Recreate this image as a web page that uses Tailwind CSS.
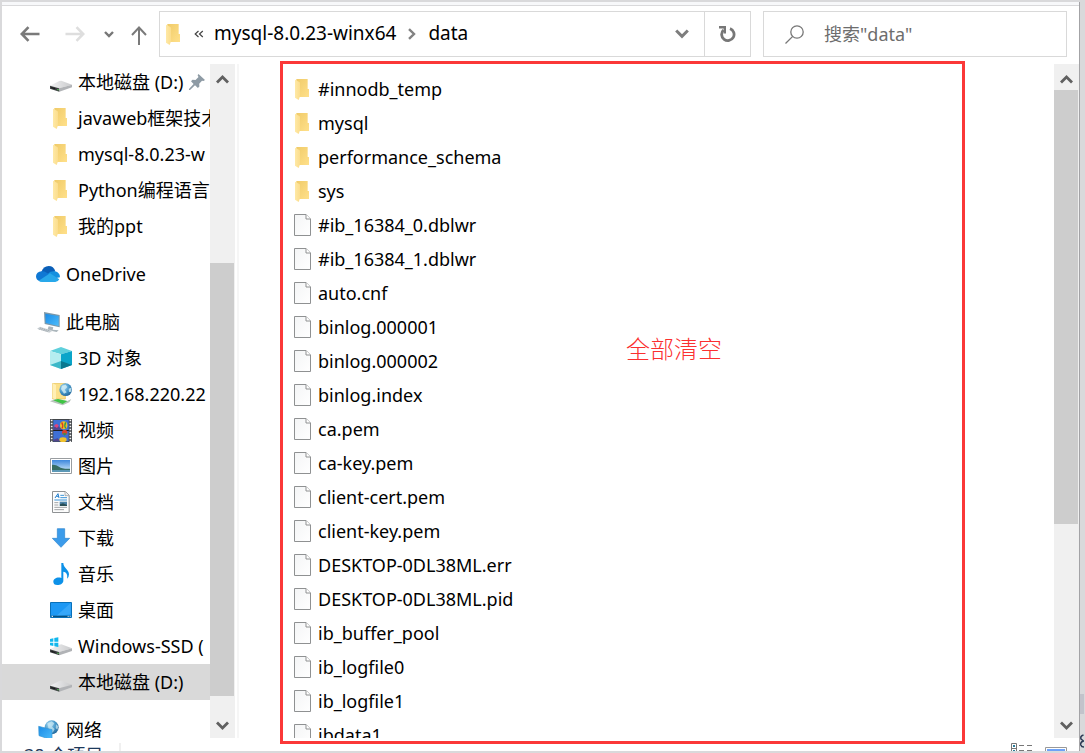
<!DOCTYPE html>
<html lang="zh-CN">
<head>
<meta charset="utf-8">
<meta name="viewport" content="width=device-width, initial-scale=1">
<title>data</title>
<script src="https://cdn.jsdelivr.net/npm/@tailwindcss/browser@4"></script>
</head>
<body class="flex h-screen overflow-hidden bg-[#d9d9db] font-['Noto_Sans','Noto_Sans_CJK_SC',sans-serif] text-lg leading-6 text-black">

<!-- Shared icons -->
<svg class="absolute size-0" aria-hidden="true">
  <defs>
    <linearGradient id="gFolder" x1="0" y1="0" x2="1" y2="1"><stop offset="0" stop-color="#f0cb69"/><stop offset="1" stop-color="#ffe08a"/></linearGradient>
    <linearGradient id="gFlap" x1="0" y1="0" x2="1" y2="0"><stop offset="0" stop-color="#ffe9a6"/><stop offset="1" stop-color="#fbdd8d"/></linearGradient>
    <linearGradient id="gFile" x1="0" y1="0" x2="1" y2="1"><stop offset="0" stop-color="#f4f5f6"/><stop offset="1" stop-color="#ffffff"/></linearGradient>
    <linearGradient id="gDisk" x1="0" y1="0" x2="1" y2="0"><stop offset="0" stop-color="#f2f2f3"/><stop offset="1" stop-color="#c9cacc"/></linearGradient>
    <linearGradient id="gScreen" x1="0" y1="0" x2="1" y2="1"><stop offset="0" stop-color="#1b8be6"/><stop offset="1" stop-color="#4dbdfb"/></linearGradient>
    <radialGradient id="gGlobe" cx=".35" cy=".3" r=".8"><stop offset="0" stop-color="#a9dcf5"/><stop offset=".55" stop-color="#4596c8"/><stop offset="1" stop-color="#1d5f93"/></radialGradient>
    <linearGradient id="gSky" x1="0" y1="0" x2="0" y2="1"><stop offset="0" stop-color="#3d87dc"/><stop offset="1" stop-color="#d9effa"/></linearGradient>
  </defs>
  <symbol id="folder" viewBox="0 0 42 63">
    <path d="M4 0H38V30H42V54H4Z" fill="url(#gFolder)"/>
    <path d="M0 2L13 9Q15 10 15 13V52L11 63L0 56Z" fill="url(#gFlap)"/>
  </symbol>
  <symbol id="file" viewBox="0 0 17 22">
    <path d="M.5.5H12L16.500 5V21.500H.5Z" fill="url(#gFile)" stroke="#8f9192"/>
    <path d="M12 .5V5H16.500" fill="#fff" stroke="#8f9192"/>
  </symbol>
  <symbol id="disk" viewBox="0 0 66 36">
    <path d="M0 17L28 3Q31 2 34 2L66 14L27 25Z" fill="url(#gDisk)"/>
    <path d="M66 14V22L28 35L27 25Z" fill="#b1b3b6"/>
    <path d="M0 17L27 25L28 35L0 26Z" fill="#3d4042"/>
    <path d="M4 21L16 25V28L4 25Z" fill="#181a1b"/><path d="M22 27h4v4h-4z" fill="#55c757"/>
  </symbol>
</svg>

<div class="my-0.5 ml-0.5 flex min-w-0 flex-1 flex-col border-r border-[#a3a3a6] bg-white">
  <div class="h-1 shrink-0 border-b border-[#d9d9db] bg-[#f7f8fa]"></div>

  <!-- Toolbar -->
  <header class="flex h-[58px] shrink-0 items-start pt-[5px] pr-3">
    <div class="flex h-[46px] w-[157px] shrink-0 items-center pl-4">
      <button aria-label="后退" class="flex w-6 justify-center"><svg width="20" height="16" viewBox="0 0 20 16" fill="none" stroke="#7a7a7a" stroke-width="2.600"><path d="M19.500 8H2M8.500 1.200L1.800 8l6.700 6.800"/></svg></button>
      <button aria-label="前进" disabled class="ml-[21px] flex w-6 justify-center"><svg width="20" height="16" viewBox="0 0 20 16" fill="none" stroke="#dedede" stroke-width="2.600"><path d="M.5 8H18M11.500 1.200L18.200 8l-6.700 6.800"/></svg></button>
      <button aria-label="最近的位置" class="ml-2.5 flex w-6 justify-center"><svg width="10" height="7" viewBox="0 0 10 7" fill="none" stroke="#777" stroke-width="2.400"><path d="M1 1l4 4 4-4"/></svg></button>
      <button aria-label="上移" class="ml-1.5 flex w-6 justify-center pt-0.5"><svg width="16" height="19" viewBox="0 0 16 19" fill="none" stroke="#7a7a7a" stroke-width="2"><path d="M8 19V1.500M1 9l7-7.500L15 9"/></svg></button>
    </div>
    <div class="flex h-[46px] min-w-0 flex-1 items-center border border-[#d9d9d9] text-[19px]">
      <svg class="ml-1.5 shrink-0" width="14" height="21"><use href="#folder"/></svg>
      <button aria-label="更多" class="ml-3.5 flex w-4"><svg width="10" height="8" viewBox="0 0 10 8" fill="none" stroke="#444" stroke-width="1.200"><path d="M4.500 1L1.200 4l3.300 3M8.800 1L5.500 4l3.300 3"/></svg></button>
      <button class="ml-1 pb-0.5 whitespace-nowrap">mysql-8.0.23-winx64</button>
      <svg class="ml-3 shrink-0" width="8" height="12" viewBox="0 0 8 12" fill="none" stroke="#828282" stroke-width="2.400"><path d="M1 1.200L6 6l-5 4.800"/></svg>
      <button class="ml-3 pb-0.5">data</button>
      <button aria-label="展开地址" class="ml-auto flex h-full w-11 items-center justify-center"><svg width="14" height="10" viewBox="0 0 14 10" fill="none" stroke="#7d7d7d" stroke-width="3"><path d="M1.200 1.500L7 7.300l5.800-5.800"/></svg></button>
      <button aria-label="刷新" class="flex h-full w-[46px] items-center justify-center border-l border-[#d9d9d9]"><svg width="17" height="17" viewBox="0 0 17 17" fill="none" stroke="#777"><path d="M4.500 4A6.200 6.200 0 1 0 11 2.600" stroke-width="2.800"/><path d="M0 1.200H5.800V7.500" stroke-width="2.400"/></svg></button>
    </div>
    <label class="ml-3 flex h-[46px] w-76 shrink-0 items-center border border-[#d9d9d9] pl-[21px]">
      <svg width="19" height="19" viewBox="0 0 19 19" fill="none" stroke="#777" stroke-width="1.300" aria-hidden="true"><circle cx="12" cy="7" r="6.200"/><path d="M7.700 11.400L.5 18.500"/></svg>
      <input type="text" aria-label="搜索" placeholder='搜索"data"' class="ml-5 min-w-0 flex-1 bg-transparent outline-none placeholder:text-[#6d6d6d]">
    </label>
  </header>

  <!-- Navigation pane and file list -->
  <div class="relative flex min-h-0 flex-1">
    <nav class="w-[208px] shrink-0 overflow-hidden whitespace-nowrap">
      <ul>
        <li><a href="#" class="flex h-9 items-center gap-1.5 pl-12"><svg class="mt-2 shrink-0" width="22" height="12"><use href="#disk"/></svg>本地磁盘 (D:)<svg class="shrink-0" width="16" height="16" viewBox="0 0 16 16" fill="#8e9ba5" aria-hidden="true"><path d="M9.500 0L16 6l-1.500 1-1.500-.2-2.800 3 .2 2.700-1.500 1.500L6 11.300 1 16H0v-1l4.600-5L2 7.200l1.500-1.400 3 .2L9.500 3 8.600 1.200Z"/></svg></a></li>
        <li><a href="#" class="flex h-9 items-center gap-1.5 pl-12"><svg class="shrink-0" width="22" height="21"><use href="#folder" x="3" width="14" height="21"/></svg>javaweb框架技术</a></li>
        <li><a href="#" class="flex h-9 items-center gap-1.5 pl-12"><svg class="shrink-0" width="22" height="21"><use href="#folder" x="3" width="14" height="21"/></svg>mysql-8.0.23-w</a></li>
        <li><a href="#" class="flex h-9 items-center gap-1.5 pl-12"><svg class="shrink-0" width="22" height="21"><use href="#folder" x="3" width="14" height="21"/></svg>Python编程语言</a></li>
        <li><a href="#" class="flex h-9 items-center gap-1.5 pl-12"><svg class="shrink-0" width="22" height="21"><use href="#folder" x="3" width="14" height="21"/></svg>我的ppt</a></li>
      </ul>
      <ul class="mt-3">
        <li><a href="#" class="flex h-9 items-center gap-1.5 pl-[34px]"><svg class="shrink-0" width="24" height="16" viewBox="0 0 72 48"><path d="M16 18Q22 0 38 0Q53 0 58 16L30 34Z" fill="#0a5fb8"/><path d="M12 46Q0 43 0 31Q1 17 17 16Q24 15 32 20L54 34L30 46Z" fill="#0f78d4"/><path d="M36 23Q44 14 57 16Q72 20 72 34L50 38Z" fill="#1490df"/><path d="M8 44L42 22L70 40Q66 48 58 48H18Q12 48 8 44Z" fill="#28a8ea"/></svg>OneDrive</a></li>
      </ul>
      <ul class="mt-3">
        <li><a href="#" class="flex h-9 items-center gap-1.5 pl-[34px]"><svg class="shrink-0" width="24" height="21" viewBox="0 0 72 63"><path d="M24 0L71 9V46L26 36Z" fill="#7d98a8"/><path d="M28 5L68 12V42L29 33Z" fill="url(#gScreen)"/><path d="M38 43L52 46L50 53L68 55L62 60L34 54Z" fill="#aab5bb"/><path d="M12 44L50 56L40 62L3 50Z" fill="#ccd2d6"/><path d="M12 48L42 57M8 51L37 59" stroke="#8e999f" stroke-dasharray="4 2" stroke-width="2"/></svg>此电脑</a></li>
        <li><a href="#" class="flex h-9 items-center gap-1.5 pl-12"><svg class="shrink-0" width="22" height="22" viewBox="0 0 66 66"><path d="M0 12L33 0L66 12L33 22Z" fill="#5fd0dc"/><path d="M0 12L33 22V66L0 54Z" fill="#b5edf0"/><path d="M66 12L33 22V66L66 54Z" fill="#0aa5c9"/><path d="M0 54L33 42V66Z" fill="#3cb8c8"/><path d="M33 42L66 54L33 66Z" fill="#08788f"/></svg>3D 对象</a></li>
        <li><a href="#" class="flex h-9 items-center gap-1.5 pl-12"><svg class="shrink-0" width="22" height="23" viewBox="0 0 66 69"><path d="M8 1H46V48H8Z" fill="#fbe08a" stroke="#e5bd4c" stroke-width="2"/><path d="M8 1L18 6V50L8 46Z" fill="#ffefb5"/><circle cx="47" cy="20" r="19" fill="url(#gGlobe)"/><path d="M36 8L47 5L52 12L44 20L50 28L42 32L33 18ZM56 17L64 14V26L57 27Z" fill="#d2edf5" opacity=".8"/><path d="M0 55L16 48L52 54L64 48L58 58L38 67L18 61Z" fill="#b9c4bc"/><path d="M10 52L24 48L52 54L38 63Z" fill="#3fc445"/></svg>192.168.220.22</a></li>
        <li><a href="#" class="flex h-9 items-center gap-1.5 pl-12"><svg class="shrink-0" width="22" height="23" viewBox="0 0 66 69"><path d="M0 0H66V69H0Z" fill="#42464a"/><path d="M10 3H56V33H10ZM10 36H56V67H10Z" fill="#3f70d5"/><path d="M10 25L25 22L38 33H10ZM10 62L23 58L31 67H10Z" fill="#52468e"/><ellipse cx="41" cy="19" rx="11" ry="12" fill="#f1be28"/><path d="M35 10Q41 20 36 28" stroke="#d73b28" stroke-width="4" fill="none"/><path d="M47 10Q42 20 47 28" stroke="#2b9b50" stroke-width="4" fill="none"/><path d="M12 21Q20 10 26 20L21 27Z" fill="#e0437a"/><path d="M10 33H56V36H10Z" fill="#1b1d22"/><circle cx="44" cy="40" r="8" fill="#d8452f"/><path d="M38 43H50L44 50Z" fill="#2b9b50"/><ellipse cx="39" cy="62" rx="11" ry="7" fill="#f0c12c"/><path d="M5 2V69M61 2V69" stroke="#f5f5f5" stroke-width="5" stroke-dasharray="5 4"/></svg>视频</a></li>
        <li><a href="#" class="flex h-9 items-center gap-1.5 pl-12"><svg class="shrink-0" width="22" height="16" viewBox="0 0 66 48"><path d="M1.500 1.500H64.500V46.500H1.500Z" fill="#fff" stroke="#999da0" stroke-width="3"/><path d="M6 6H60V42H6Z" fill="url(#gSky)"/><path d="M6 20Q18 19 27 26T60 32V36H6Z" fill="#376d63"/><path d="M6 36H60V42H6Z" fill="#5c98b6"/></svg>图片</a></li>
        <li><a href="#" class="flex h-9 items-center gap-1.5 pl-12"><svg class="shrink-0" width="22" height="22" viewBox="0 0 66 66"><path d="M7.500 1.500H46L57.500 13V64.500H7.500Z" fill="#fdfdfd" stroke="#8f9294" stroke-width="3"/><path d="M45 2V14H57" fill="#ededed" stroke="#8f9294" stroke-width="2"/><path d="M15 21L24 8L27 21M19 16H27" stroke="#2380cf" stroke-width="3" fill="none"/><path d="M31 13H42M31 20H51M13 27H51" stroke="#3b94d7" stroke-width="3"/><path d="M13 35H25M13 42H25M13 49H51M13 56H42" stroke="#a0a3a5" stroke-width="3"/><path d="M29 32H51V45H29Z" fill="#4b82a7"/><path d="M30 40L39 37L51 42V45H30Z" fill="#284e55"/></svg>文档</a></li>
        <li><a href="#" class="flex h-9 items-center gap-1.5 pl-12"><svg class="shrink-0" width="22" height="20" viewBox="0 0 66 60"><path d="M22 2H44V31H59L33 58L7 31H22Z" fill="#3b9bea" stroke="#2883cf" stroke-width="2"/></svg>下载</a></li>
        <li><a href="#" class="flex h-9 items-center gap-1.5 pl-12"><svg class="shrink-0" width="22" height="22" viewBox="0 0 66 66"><path d="M34 0H40C40 16 57 19 57 34Q57 43 51 47C54 32 47 27 40 26V53C40 61 31 66 22 66C14 66 10 62 10 56C10 47 22 41 34 45Z" fill="#0d91e8"/></svg>音乐</a></li>
        <li><a href="#" class="flex h-9 items-center gap-1.5 pl-12"><svg class="shrink-0" width="22" height="16" viewBox="0 0 66 48"><path d="M1.500 1.500H64.500V46.500H1.500Z" fill="#1d98f4" stroke="#0870ba" stroke-width="3"/><path d="M62 3V37L18 43Z" fill="#49b1fb" opacity=".6"/><path d="M3 43H63" stroke="#075181" stroke-width="4"/><path d="M5 43H9M53 43H56M59 43H62" stroke="#fff" stroke-width="3"/></svg>桌面</a></li>
        <li><a href="#" class="flex h-9 items-center gap-1.5 pl-12"><svg class="shrink-0" width="22" height="22" viewBox="0 0 66 66"><use href="#disk" y="26" width="66" height="36"/><path d="M0 12L10 10V20H0ZM13 9L25 7V20H13ZM0 23H10V33L0 31ZM13 23H25V36L13 34Z" fill="#11b7ed"/></svg>Windows-SSD (</a></li>
        <li><a href="#" aria-current="page" class="flex h-9 items-center gap-1.5 bg-[#d9d9d9] pl-12"><svg class="mt-2 shrink-0" width="22" height="12"><use href="#disk"/></svg>本地磁盘 (D:)</a></li>
      </ul>
      <ul class="mt-3">
        <li><a href="#" class="flex h-9 items-center gap-1.5 pl-[34px]"><svg class="shrink-0" width="24" height="20" viewBox="0 0 72 60"><circle cx="47" cy="22" r="21" fill="url(#gGlobe)"/><path d="M34 10L47 4L55 10L48 20L56 27L50 38L38 28ZM60 13L67 19L64 29L59 24Z" fill="#cdeaf4" opacity=".7"/><path d="M8 19L48 29V60L9 47Z" fill="url(#gScreen)" stroke="#3999d4" stroke-width="2"/></svg>网络</a></li>
      </ul>
    </nav>

    <div class="flex w-[25px] shrink-0 flex-col bg-[#f0f0f0]">
      <button aria-label="向上滚动" class="flex h-[26px] shrink-0 items-center justify-center pt-1"><svg width="13" height="9" viewBox="0 0 13 9" fill="none" stroke="#606060" stroke-width="2.800"><path d="M1 7.500l5.500-5.500L12 7.500"/></svg></button>
      <div class="flex min-h-0 flex-1 flex-col">
        <div class="flex-[173]"></div><div class="mr-px flex-[433] bg-[#cdcdcd]"></div><div class="flex-[16]"></div>
      </div>
      <button aria-label="向下滚动" class="flex h-[26px] shrink-0 items-center justify-center"><svg width="13" height="9" viewBox="0 0 13 9" fill="none" stroke="#606060" stroke-width="2.800"><path d="M1 1.500L6.500 7 12 1.500"/></svg></button>
    </div>
    <div class="ml-0.5 w-0.5 shrink-0 bg-[#f6f6f6]"></div>

    <main class="min-w-0 flex-1 overflow-hidden pt-2 pl-[55px] whitespace-nowrap">
      <ul>
        <li><a href="#" class="flex h-[34px] items-center gap-1.5"><svg width="18" height="21"><use href="#folder" x="1" width="14" height="21"/></svg>#innodb_temp</a></li>
        <li><a href="#" class="flex h-[34px] items-center gap-1.5"><svg width="18" height="21"><use href="#folder" x="1" width="14" height="21"/></svg>mysql</a></li>
        <li><a href="#" class="flex h-[34px] items-center gap-1.5"><svg width="18" height="21"><use href="#folder" x="1" width="14" height="21"/></svg>performance_schema</a></li>
        <li><a href="#" class="flex h-[34px] items-center gap-1.5"><svg width="18" height="21"><use href="#folder" x="1" width="14" height="21"/></svg>sys</a></li>
        <li><a href="#" class="flex h-[34px] items-center gap-1.5"><svg width="18" height="22"><use href="#file" width="17" height="22"/></svg>#ib_16384_0.dblwr</a></li>
        <li><a href="#" class="flex h-[34px] items-center gap-1.5"><svg width="18" height="22"><use href="#file" width="17" height="22"/></svg>#ib_16384_1.dblwr</a></li>
        <li><a href="#" class="flex h-[34px] items-center gap-1.5"><svg width="18" height="22"><use href="#file" width="17" height="22"/></svg>auto.cnf</a></li>
        <li><a href="#" class="flex h-[34px] items-center gap-1.5"><svg width="18" height="22"><use href="#file" width="17" height="22"/></svg>binlog.000001</a></li>
        <li><a href="#" class="flex h-[34px] items-center gap-1.5"><svg width="18" height="22"><use href="#file" width="17" height="22"/></svg>binlog.000002</a></li>
        <li><a href="#" class="flex h-[34px] items-center gap-1.5"><svg width="18" height="22"><use href="#file" width="17" height="22"/></svg>binlog.index</a></li>
        <li><a href="#" class="flex h-[34px] items-center gap-1.5"><svg width="18" height="22"><use href="#file" width="17" height="22"/></svg>ca.pem</a></li>
        <li><a href="#" class="flex h-[34px] items-center gap-1.5"><svg width="18" height="22"><use href="#file" width="17" height="22"/></svg>ca-key.pem</a></li>
        <li><a href="#" class="flex h-[34px] items-center gap-1.5"><svg width="18" height="22"><use href="#file" width="17" height="22"/></svg>client-cert.pem</a></li>
        <li><a href="#" class="flex h-[34px] items-center gap-1.5"><svg width="18" height="22"><use href="#file" width="17" height="22"/></svg>client-key.pem</a></li>
        <li><a href="#" class="flex h-[34px] items-center gap-1.5"><svg width="18" height="22"><use href="#file" width="17" height="22"/></svg>DESKTOP-0DL38ML.err</a></li>
        <li><a href="#" class="flex h-[34px] items-center gap-1.5"><svg width="18" height="22"><use href="#file" width="17" height="22"/></svg>DESKTOP-0DL38ML.pid</a></li>
        <li><a href="#" class="flex h-[34px] items-center gap-1.5"><svg width="18" height="22"><use href="#file" width="17" height="22"/></svg>ib_buffer_pool</a></li>
        <li><a href="#" class="flex h-[34px] items-center gap-1.5"><svg width="18" height="22"><use href="#file" width="17" height="22"/></svg>ib_logfile0</a></li>
        <li><a href="#" class="flex h-[34px] items-center gap-1.5"><svg width="18" height="22"><use href="#file" width="17" height="22"/></svg>ib_logfile1</a></li>
        <li><a href="#" class="flex h-[34px] items-center gap-1.5"><svg width="18" height="22"><use href="#file" width="17" height="22"/></svg>ibdata1</a></li>
      </ul>
    </main>

    <div class="flex w-[25px] shrink-0 flex-col bg-[#f0f0f0]">
      <button aria-label="向上滚动" class="flex h-[26px] shrink-0 items-center justify-center pt-1"><svg width="13" height="9" viewBox="0 0 13 9" fill="none" stroke="#606060" stroke-width="2.800"><path d="M1 7.500l5.500-5.500L12 7.500"/></svg></button>
      <div class="flex min-h-0 flex-1 flex-col">
        <div class="mr-px flex-[434] bg-[#cdcdcd]"></div><div class="flex-[188]"></div>
      </div>
      <button aria-label="向下滚动" class="flex h-[26px] shrink-0 items-center justify-center"><svg width="13" height="9" viewBox="0 0 13 9" fill="none" stroke="#606060" stroke-width="2.800"><path d="M1 1.500L6.500 7 12 1.500"/></svg></button>
    </div>

    <!-- Markup frame over the file list -->
    <div class="pointer-events-none absolute -top-[3px] right-[114px] -bottom-1.5 left-[278px] border-3 border-[#fb3838]">
      <p class="mt-[267px] ml-[343px] text-2xl leading-9 font-light text-[#fb3030]">全部清空</p>
    </div>
  </div>

  <!-- Status bar -->
  <footer class="flex h-[13px] shrink-0 items-start overflow-hidden pt-[5px] pr-3 pl-[22px] text-[#1e395b]">
    <span class="whitespace-nowrap">38 个项目</span>
    <span class="ml-4 h-6 w-0.5 bg-[#f0f0f0]"></span>
    <button aria-label="详细信息" class="ml-auto"><svg width="22" height="16" viewBox="0 0 22 16" fill="none" stroke="#777"><path d="M.5.5H5.500V15.500H.5ZM.5 5.500H5.500M8 2.500H13M16 2.500H21M8 7.500H13M16 7.500H21"/><path d="M2 3H4M2 8H4" stroke="#2a7d9a" stroke-width="2"/></svg></button>
    <button aria-label="大图标" class="ml-3 pt-1"><svg width="22" height="16" viewBox="0 0 22 16"><path d="M.5.5H21.500V15.500H.5Z" fill="#fff" stroke="#999"/><path d="M2 2H20V14H2Z" fill="#6ea2f8"/></svg></button>
  </footer>
</div>

<!-- Sliver of the window behind -->
<div class="flex w-[5px] shrink-0 flex-col justify-end pb-[5px]" aria-hidden="true">
  <div class="mr-px h-5 bg-[#c2c3cb]"></div>
  <svg class="mt-5" width="4" height="14" viewBox="0 0 4 14" fill="none" stroke="#2c3a55" stroke-width="1.500"><path d="M3.500 1Q0 2 1 5L3.500 7Q0 8 .8 11Q1.500 13 4 13"/></svg>
</div>
</body>
</html>
